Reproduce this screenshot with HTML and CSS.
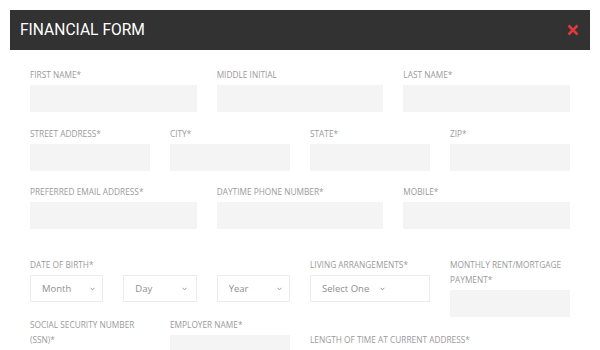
FILE: index.html
```html
<!DOCTYPE html>
<html>
<head>
<meta charset="utf-8">
<link rel="stylesheet" href="styles.css">
</head>
<body>
<div class="modal">
  <div class="header">
    <h1 class="title">FINANCIAL FORM</h1>
    <svg class="close" width="12" height="12" viewBox="0 0 12 12"><path d="M1.5 1.5 L10.5 10.5 M10.5 1.5 L1.5 10.5" stroke="#e0393b" stroke-width="2.6" stroke-linecap="butt"/></svg>
  </div>
  <div class="form">
    <div class="row three">
      <div class="field"><div class="label">FIRST NAME*</div><div class="input"></div></div>
      <div class="field"><div class="label">MIDDLE INITIAL</div><div class="input"></div></div>
      <div class="field"><div class="label">LAST NAME*</div><div class="input"></div></div>
    </div>
    <div class="row">
      <div class="field"><div class="label">STREET ADDRESS*</div><div class="input"></div></div>
      <div class="field"><div class="label">CITY*</div><div class="input"></div></div>
      <div class="field"><div class="label">STATE*</div><div class="input"></div></div>
      <div class="field"><div class="label">ZIP*</div><div class="input"></div></div>
    </div>
    <div class="row three">
      <div class="field"><div class="label">PREFERRED EMAIL ADDRESS*</div><div class="input"></div></div>
      <div class="field"><div class="label">DAYTIME PHONE NUMBER*</div><div class="input"></div></div>
      <div class="field"><div class="label">MOBILE*</div><div class="input"></div></div>
    </div>
    <div class="row row-dob">
      <div class="field span2">
        <div class="label">DATE OF BIRTH*</div>
        <div class="sub3">
          <div class="select sel-month"><span class="sel-text">Month</span><svg class="chev" width="5" height="4" viewBox="0 0 5 4"><path d="M0.6 0.8 L2.5 2.9 L4.4 0.8" fill="none" stroke="#a0a0a0" stroke-width="1"/></svg></div>
          <div class="select sel-day"><span class="sel-text">Day</span><svg class="chev" width="5" height="4" viewBox="0 0 5 4"><path d="M0.6 0.8 L2.5 2.9 L4.4 0.8" fill="none" stroke="#a0a0a0" stroke-width="1"/></svg></div>
          <div class="select sel-year"><span class="sel-text">Year</span><svg class="chev" width="5" height="4" viewBox="0 0 5 4"><path d="M0.6 0.8 L2.5 2.9 L4.4 0.8" fill="none" stroke="#a0a0a0" stroke-width="1"/></svg></div>
        </div>
      </div>
      <div class="field">
        <div class="label">LIVING ARRANGEMENTS*</div>
        <div class="select sel-one"><span class="sel-text">Select One</span><svg class="chev" width="5" height="4" viewBox="0 0 5 4"><path d="M0.6 0.8 L2.5 2.9 L4.4 0.8" fill="none" stroke="#a0a0a0" stroke-width="1"/></svg></div>
      </div>
      <div class="field"><div class="label">MONTHLY RENT/MORTGAGE PAYMENT*</div><div class="input"></div></div>
    </div>
    <div class="row row-last">
      <div class="field"><div class="label">SOCIAL SECURITY NUMBER (SSN)*</div><div class="select"></div></div>
      <div class="field"><div class="label">EMPLOYER NAME*</div><div class="input"></div></div>
      <div class="field span2 shifted">
        <div class="label">LENGTH OF TIME AT CURRENT ADDRESS*</div>
        <div class="sub2">
          <div class="select"></div>
          <div class="select"></div>
        </div>
      </div>
    </div>
  </div>
</div>
</body>
</html>
```

FILE: styles.css
```css
html, body {
  margin: 0;
  padding: 0;
  background: #ffffff;
}

.modal {
  margin: 10px 10px 0;
}

.header {
  height: 40px;
  background: #323232;
  display: flex;
  align-items: center;
  justify-content: space-between;
  padding: 0 11px 0 10px;
}

.title {
  margin: 0;
  font-family: Roboto, "Liberation Sans", sans-serif;
  font-weight: 400;
  font-size: 15.6px;
  color: #ffffff;
}

.close {
  display: block;
}

.form {
  padding: 17px 20px 0;
}

.row {
  display: grid;
  grid-template-columns: repeat(4, 1fr);
  column-gap: 20px;
  margin-bottom: 13.5px;
  align-items: start;
}

.row.three {
  grid-template-columns: repeat(3, 1fr);
}

.row-dob {
  margin-top: 28px;
  margin-bottom: 0;
}

.span2 {
  grid-column: span 2;
}

.shifted {
  margin-top: 15px;
}

.label {
  font-family: "Open Sans", "Liberation Sans", sans-serif;
  font-size: 8.3px;
  line-height: 15px;
  color: #9a9a9a;
  margin-bottom: 3px;
  text-transform: uppercase;
}

.input {
  height: 27px;
  background: #f4f4f4;
}

.sub3 {
  display: grid;
  grid-template-columns: repeat(3, 1fr);
  column-gap: 20px;
}

.sub2 {
  display: grid;
  grid-template-columns: repeat(2, 1fr);
  column-gap: 20px;
}

.select {
  height: 27px;
  box-sizing: border-box;
  border: 1px solid #ececec;
  background: #ffffff;
  display: flex;
  align-items: center;
  font-family: "Open Sans", "Liberation Sans", sans-serif;
  font-size: 9.5px;
  color: #8f8f8f;
}

.sel-text {
  flex: 1;
}

.chev {
  display: block;
}

.sel-month {
  padding: 0 7px 0 11px;
}

.sel-day {
  padding: 0 9px 0 11px;
}

.sel-year {
  padding: 0 7px 0 11px;
}

.sel-one {
  padding: 0 44px 0 11px;
}
```
